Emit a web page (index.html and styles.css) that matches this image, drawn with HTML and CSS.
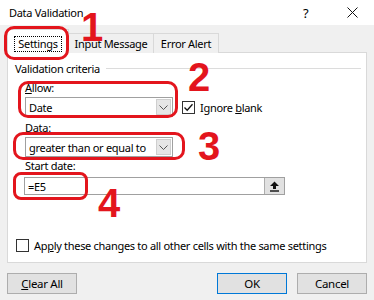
FILE: index.html
```html
<!DOCTYPE html>
<html lang="en">
<head>
  <meta charset="UTF-8">
  <meta name="viewport" content="width=device-width, initial-scale=1.0">
  <title>Data Validation</title>
  <link rel="stylesheet" href="styles.css">
</head>
<body>

  <div class="dialog">
    <div class="titlebar">
      <span class="title">Data Validation</span>
      <span class="help">?</span>
      <span class="close">
        <svg width="11" height="11" viewBox="0 0 11 11"><path d="M0.5 0.5 L10.5 10.5 M10.5 0.5 L0.5 10.5" stroke="#111" stroke-width="1"/></svg>
      </span>
    </div>

    <div class="content">
      <div class="tabs">
        <div class="tab active"><span class="focus">Settings</span></div>
        <div class="tab">Input Message</div>
        <div class="tab">Error Alert</div>
      </div>

      <div class="panel">
        <div class="group-title">
          <span>Validation criteria</span>
          <span class="rule"></span>
        </div>

        <div class="field-label"><u>A</u>llow:</div>
        <div class="row">
          <div class="combo">
            <span class="combo-text">Date</span>
            <span class="arrow">
              <svg width="9" height="5" viewBox="0 0 9 5"><path d="M0.5 0.5 L4.5 4.5 L8.5 0.5" fill="none" stroke="#555" stroke-width="1"/></svg>
            </span>
          </div>
          <div class="check">
            <span class="box">
              <svg width="11" height="11" viewBox="0 0 11 11"><path d="M1.5 5.5 L4.2 8.3 L9.5 2.2" fill="none" stroke="#111" stroke-width="1.3"/></svg>
            </span>
            <span>Ignore <u>b</u>lank</span>
          </div>
        </div>

        <div class="field-label second">Data:</div>
        <div class="combo">
          <span class="combo-text">greater than or equal to</span>
          <span class="arrow">
            <svg width="9" height="5" viewBox="0 0 9 5"><path d="M0.5 0.5 L4.5 4.5 L8.5 0.5" fill="none" stroke="#555" stroke-width="1"/></svg>
          </span>
        </div>

        <div class="field-label third">Start date:</div>
        <div class="ref-input">
          <span class="ref-text">=E5</span>
          <span class="ref-btn">
            <svg width="11" height="11" viewBox="0 0 11 11"><path d="M5.5 0.5 L10 5 L7 5 L7 8 L4 8 L4 5 L1 5 Z" fill="#111"/><rect x="1" y="9.3" width="9" height="1.4" fill="#111"/></svg>
          </span>
        </div>

        <div class="check apply">
          <span class="box"></span>
          <span>Ap<u>p</u>ly these changes to all other cells with the same settings</span>
        </div>
      </div>

      <div class="buttons">
        <button class="btn"><u>C</u>lear All</button>
        <span class="spacer"></span>
        <button class="btn default">OK</button>
        <button class="btn">Cancel</button>
      </div>
    </div>

    <!-- red callouts drawn over the screenshot -->
    <div class="ring ring-1"></div>
    <div class="ring ring-2"></div>
    <div class="ring ring-3"></div>
    <div class="ring ring-4"></div>
    <div class="num num-1">1</div>
    <div class="num num-2">2</div>
    <div class="num num-3">3</div>
    <div class="num num-4">4</div>
  </div>

</body>
</html>
```

FILE: styles.css
```css
body {
  margin: 0;
  font-family: "Noto Sans", "Open Sans", sans-serif;
  font-size: 11px;
  letter-spacing: -0.3px;
  color: #000;
  background-color: #f0f0f0;
}

.dialog {
  position: relative;
  width: 374px;
  height: 300px;
  overflow: hidden;
  background-color: #f0f0f0;
}

.titlebar {
  height: 25px;
  background-color: #fff;
  display: flex;
  align-items: center;
  padding-left: 9px;
  font-size: 11px;
}

.title {
  flex: 1;
}

.help {
  width: 12px;
  margin-right: 32px;
  font-size: 13px;
}

.close {
  display: flex;
  margin-right: 16px;
}

.content {
  padding: 0 7px;
}

.tabs {
  display: flex;
  align-items: flex-end;
  height: 23px;
  margin-top: 5px;
  position: relative;
  z-index: 1;
}

.tab {
  height: 19px;
  display: flex;
  align-items: center;
  justify-content: center;
  white-space: nowrap;
  border: 1px solid #d9d9d9;
  border-left: none;
  border-bottom: none;
  background-color: #f0f0f0;
}

.tab:nth-child(2) {
  width: 84px;
}

.tab:nth-child(3) {
  width: 64px;
}

.tab.active {
  width: 60px;
  height: 23px;
  border-left: 1px solid #d9d9d9;
  background-color: #fff;
  align-items: flex-end;
}

.focus {
  border: 1px dotted #000;
  padding: 0 3px 1px;
  line-height: 13px;
  margin-bottom: 1px;
}

.panel {
  margin-top: -1px;
  height: 192px;
  background-color: #fff;
  border: 1px solid #d9d9d9;
  padding: 8px 5px 9px 7px;
  display: flex;
  flex-direction: column;
}

.group-title {
  display: flex;
  align-items: center;
  height: 14px;
}

.rule {
  flex: 1;
  height: 1px;
  background-color: #dcdcdc;
  margin-left: 6px;
}

.field-label {
  margin: 6px 0 0 10px;
  line-height: 14px;
}

.field-label.second {
  margin-top: 4px;
}

.field-label.third {
  margin-top: 2px;
}

.row {
  display: flex;
  align-items: center;
}

.combo {
  width: 146px;
  height: 18px;
  margin: 2px 0 0 10px;
  border: 1px solid #a0a0a0;
  display: flex;
  align-items: center;
  background-color: #fff;
}

.combo-text {
  flex: 1;
  padding-left: 3px;
  white-space: nowrap;
  overflow: hidden;
}

.arrow {
  width: 15px;
  height: 16px;
  margin-right: 1px;
  background-color: #e6e6e6;
  border: 1px solid #cfcfcf;
  box-sizing: border-box;
  display: flex;
  align-items: center;
  justify-content: center;
}

.check {
  display: flex;
  align-items: center;
  white-space: nowrap;
  margin-left: 9px;
  margin-top: 2px;
}

.box {
  width: 11px;
  height: 11px;
  border: 1px solid #333;
  margin-right: 5px;
  display: flex;
  background-color: #fff;
}

.ref-input {
  width: 259px;
  height: 16px;
  margin: 4px 0 0 9px;
  border: 1px solid #a0a0a0;
  display: flex;
  align-items: center;
}

.ref-text {
  flex: 1;
  padding-left: 3px;
}

.ref-btn {
  width: 19px;
  height: 16px;
  background-color: #e1e1e1;
  border-left: 1px solid #adadad;
  display: flex;
  align-items: center;
  justify-content: center;
}

.apply {
  margin: auto 0 0 1px;
}

.buttons {
  display: flex;
  margin-top: 10px;
}

.spacer {
  flex: 1;
}

.btn {
  width: 70px;
  height: 21px;
  padding: 0;
  font-family: inherit;
  font-size: 11.5px;
  letter-spacing: -0.3px;
  background-color: #e1e1e1;
  border: 1px solid #adadad;
  color: #000;
}

.btn.default {
  border-color: #0078d7;
  margin-right: 10px;
}

.ring {
  position: absolute;
  border: 3px solid #e3151d;
  border-radius: 10px;
  z-index: 2;
}

.ring-1 {
  left: 4px;
  top: 26px;
  width: 59px;
  height: 28px;
}

.ring-2 {
  left: 18px;
  top: 81px;
  width: 154px;
  height: 31px;
}

.ring-3 {
  left: 13px;
  top: 132px;
  width: 166px;
  height: 22px;
}

.ring-4 {
  left: 13px;
  top: 172px;
  width: 69px;
  height: 22px;
  border-radius: 8px;
}

.num {
  position: absolute;
  z-index: 2;
  font-family: "Liberation Sans", Arial, sans-serif;
  font-weight: bold;
  font-size: 40px;
  line-height: 29px;
  letter-spacing: 0;
  color: #e3151d;
}

.num-1 {
  left: 81px;
  top: 13px;
}

.num-2 {
  left: 188px;
  top: 63px;
}

.num-3 {
  left: 198px;
  top: 132px;
}

.num-4 {
  left: 98px;
  top: 189px;
}
```
